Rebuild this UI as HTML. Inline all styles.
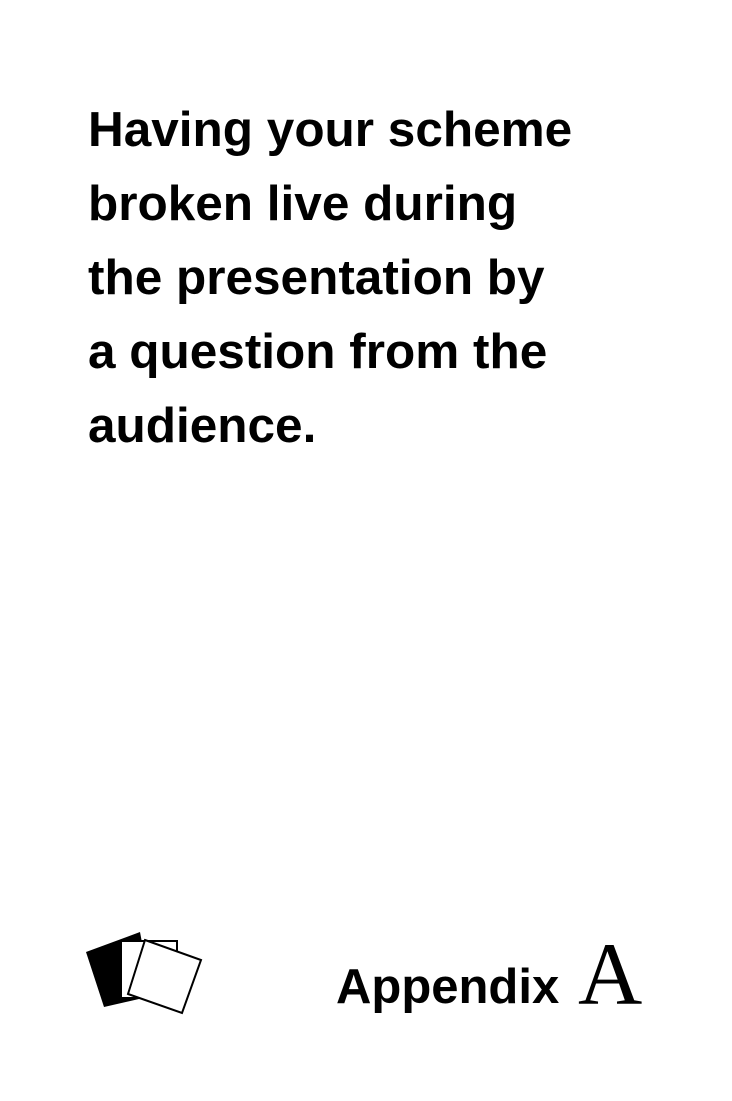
<!DOCTYPE html>
<html><head><meta charset="utf-8"><style>
html,body{margin:0;padding:0;background:#fff;}
body{width:732px;height:1101px;position:relative;overflow:hidden;font-family:"Liberation Sans",Arial,sans-serif;}
.t{position:absolute;left:88px;top:93px;font-weight:bold;font-size:49.5px;line-height:74px;color:#000;white-space:nowrap;}
.ap{position:absolute;left:336px;top:950px;font-weight:bold;font-size:49px;line-height:74px;white-space:nowrap;}
.A{position:absolute;left:578px;top:920px;font-family:"Liberation Serif",serif;font-size:89px;line-height:110px;}
</style></head><body>
<div class="t">Having your scheme<br>broken live during<br>the presentation by<br>a question from the<br>audience.</div>
<svg style="position:absolute;left:0;top:0" width="732" height="1101">
<polygon points="86,952 140,932 152,996 104,1007" fill="#000"/>
<rect x="121" y="941" width="56" height="57" fill="#fff" stroke="#000" stroke-width="2"/>
<polygon points="145,940 201,960 182,1013 128,994" fill="#fff" stroke="#000" stroke-width="2"/>
</svg>
<div class="ap">Appendix</div>
<div class="A">A</div>
</body></html>
